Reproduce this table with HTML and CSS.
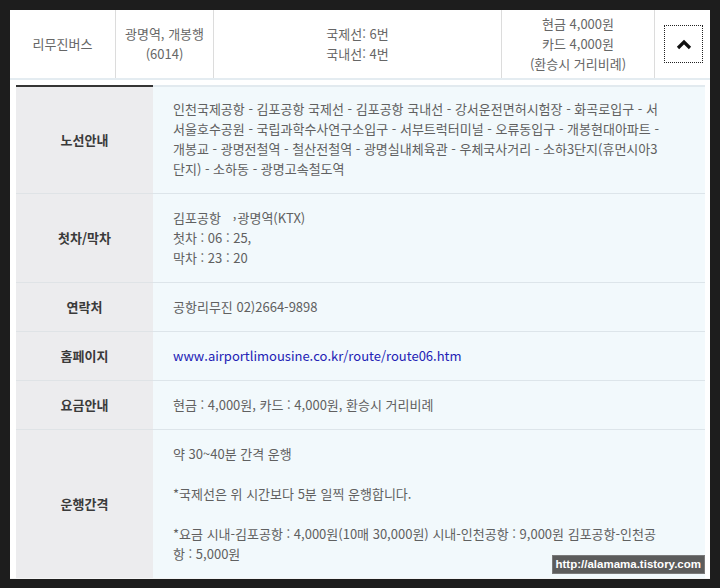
FILE: index.html
```html
<!DOCTYPE html>
<html lang="ko">
<head>
<meta charset="utf-8">
<title>리무진버스</title>
<link rel="stylesheet" href="styles.css">
</head>
<body>
<div class="frame">
  <div class="summary">
    <div class="c c1">리무진버스</div>
    <div class="c c2">광명역, 개봉행<br>(6014)</div>
    <div class="c c3">국제선: 6번<br>국내선: 4번</div>
    <div class="c c4">현금 4,000원<br>카드 4,000원<br>(환승시 거리비례)</div>
    <div class="c c5">
      <button class="toggle" type="button" aria-label="접기">
        <svg width="16" height="11" viewBox="0 0 16 11"><path d="M2 9 L8 3 L14 9" fill="none" stroke="#111" stroke-width="3.2"/></svg>
      </button>
    </div>
  </div>
  <div class="detail">
    <div class="row first">
      <div class="th">노선안내</div>
      <div class="td">인천국제공항 - 김포공항 국제선 - 김포공항 국내선 - 강서운전면허시험장 - 화곡로입구 - 서<br>서울호수공원 - 국립과학수사연구소입구 - 서부트럭터미널 - 오류동입구 - 개봉현대아파트 -<br>개봉교 - 광명전철역 - 철산전철역 - 광명실내체육관 - 우체국사거리 - 소하3단지(휴먼시아3<br>단지) - 소하동 - 광명고속철도역</div>
    </div>
    <div class="row">
      <div class="th">첫차/막차</div>
      <div class="td">김포공항<span class="gap"></span><span class="mark">,</span>광명역(KTX)<br>첫차 : 06 : 25,<br>막차 : 23 : 20</div>
    </div>
    <div class="row">
      <div class="th">연락처</div>
      <div class="td">공항리무진 02)2664-9898</div>
    </div>
    <div class="row">
      <div class="th">홈페이지</div>
      <div class="td"><a class="link" href="#">www.airportlimousine.co.kr/route/route06.htm</a></div>
    </div>
    <div class="row">
      <div class="th">요금안내</div>
      <div class="td">현금 : 4,000원, 카드 : 4,000원, 환승시 거리비례</div>
    </div>
    <div class="row last">
      <div class="th">운행간격</div>
      <div class="td">약 30~40분 간격 운행<br><br>*국제선은 위 시간보다 5분 일찍 운행합니다.<br><br>*요금 시내-김포공항 : 4,000원(10매 30,000원) 시내-인천공항 : 9,000원 김포공항-인천공<br>항 : 5,000원</div>
    </div>
  </div>
  <div class="watermark">http://alamama.tistory.com</div>
</div>
</body>
</html>
```

FILE: styles.css
```css
html, body {
  margin: 0;
  padding: 0;
}
body {
  background: #1d1d1d;
  width: 720px;
  height: 588px;
  overflow: hidden;
  font-family: "Noto Sans CJK KR", "Noto Sans", sans-serif;
  font-size: 13px;
  color: #606060;
}
.frame {
  position: relative;
  margin: 10px 0 0 10px;
  width: 700px;
  height: 568px;
  background: #fff;
  overflow: hidden;
  border-bottom: 1px solid #f4f4f4;
}
.summary {
  display: flex;
  height: 68px;
  border-bottom: 2px solid #e4ecf1;
  line-height: 20px;
  color: #666;
}
.c {
  display: flex;
  align-items: center;
  justify-content: center;
  text-align: center;
  border-right: 1px solid #dcdcdc;
}
.c1 { width: 105px; }
.c2 { width: 97px; }
.c3 { width: 287px; }
.c4 { width: 152px; }
.c5 { flex: 1; border-right: none; }
.toggle {
  width: 39px;
  height: 38px;
  margin-left: 2px;
  border: 1px dotted #222;
  background: #fff;
  padding: 0;
  display: flex;
  align-items: center;
  justify-content: center;
}
.detail {
  margin: 5px 5px 0 6px;
}
.row {
  display: flex;
  line-height: 20px;
}
.th {
  width: 137px;
  flex: none;
  background: #ececee;
  color: #3a3a3a;
  font-weight: 700;
  display: flex;
  align-items: center;
  justify-content: center;
  border-bottom: 1px solid #dfe3e6;
}
.td {
  flex: 1;
  background: #f2f9fc;
  padding: 14px 10px 14px 20px;
  border-bottom: 1px solid #dde5ea;
  white-space: nowrap;
}
.row.first .th {
  border-top: 2px solid #343434;
}
.row.first .td {
  border-top: 2px solid #e2eaef;
  padding-top: 12px;
}
.row.last .th,
.row.last .td {
  border-bottom: none;
}
.gap {
  display: inline-block;
  width: 12px;
}
.mark {
  display: inline-block;
  position: relative;
  top: -4px;
  margin-right: 1px;
}
.link {
  color: #2222b5;
  text-decoration: none;
}
.watermark {
  position: absolute;
  right: 5px;
  bottom: 4px;
  height: 17px;
  padding: 0 3px;
  background: #5c5c5c;
  border: 1px solid #7a7a7a;
  color: #fff;
  font-family: "Liberation Sans", Arial, sans-serif;
  font-weight: 700;
  font-size: 11.5px;
  line-height: 17px;
}
```
